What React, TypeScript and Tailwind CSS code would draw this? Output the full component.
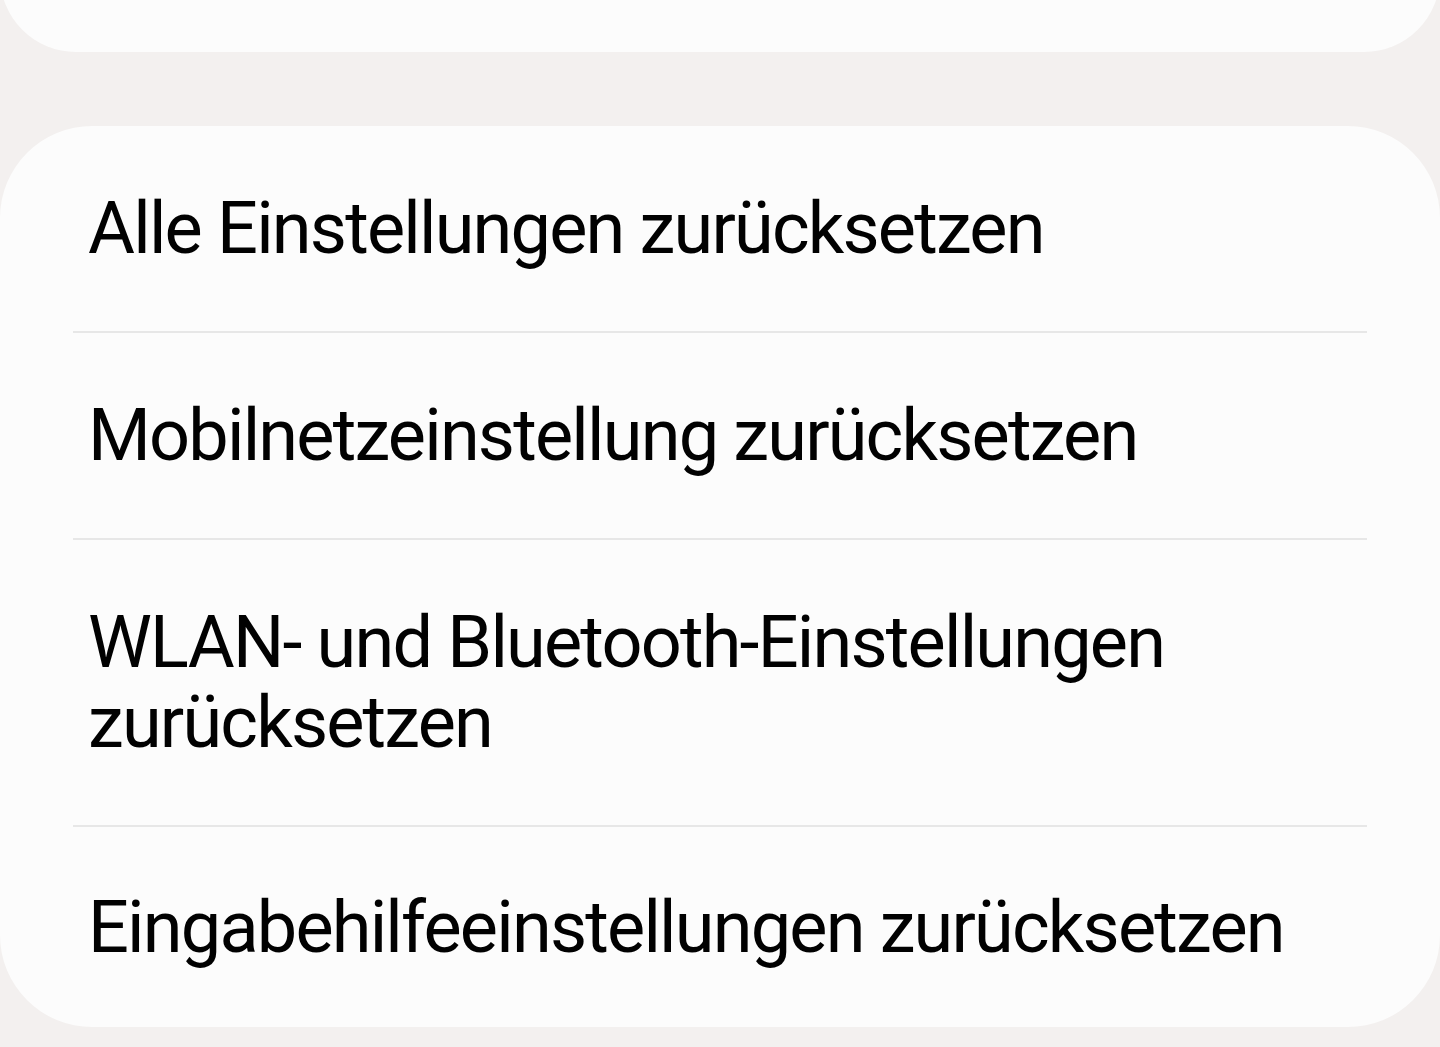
const ROWS = [
  ["Alle Einstellungen zurücksetzen"],
  ["Mobilnetzeinstellung zurücksetzen"],
  ["WLAN- und Bluetooth-Einstellungen", "zurücksetzen"],
  ["Eingabehilfeeinstellungen zurücksetzen"],
];

export default function App() {
  return (
    <div className="h-[1047px] w-[1440px] overflow-hidden bg-[#f3f0ef] font-['Roboto',sans-serif] text-[#010101]">
      {/* previous group, only its bottom edge is visible */}
      <div className="-mt-[100px] h-[152px] rounded-[92px] bg-[#fcfcfc]" />

      <div className="mt-[74px] rounded-[92px] bg-[#fcfcfc]">
        {ROWS.map((lines, i) => (
          <div key={i}>
            {i > 0 && <div className="mx-[73px] h-[2px] bg-[#e7e7e7]" />}
            <div
              className={
                i === ROWS.length - 1
                  ? "pl-[88px] pt-[61px] pb-[59px] text-[72px] leading-[80px] tracking-[-1.8px]"
                  : "pl-[88px] pt-[63px] pb-[62px] text-[72px] leading-[80px] tracking-[-1.8px]"
              }
            >
              {lines.map((l) => (
                <div key={l}>{l}</div>
              ))}
            </div>
          </div>
        ))}
      </div>
    </div>
  );
}
